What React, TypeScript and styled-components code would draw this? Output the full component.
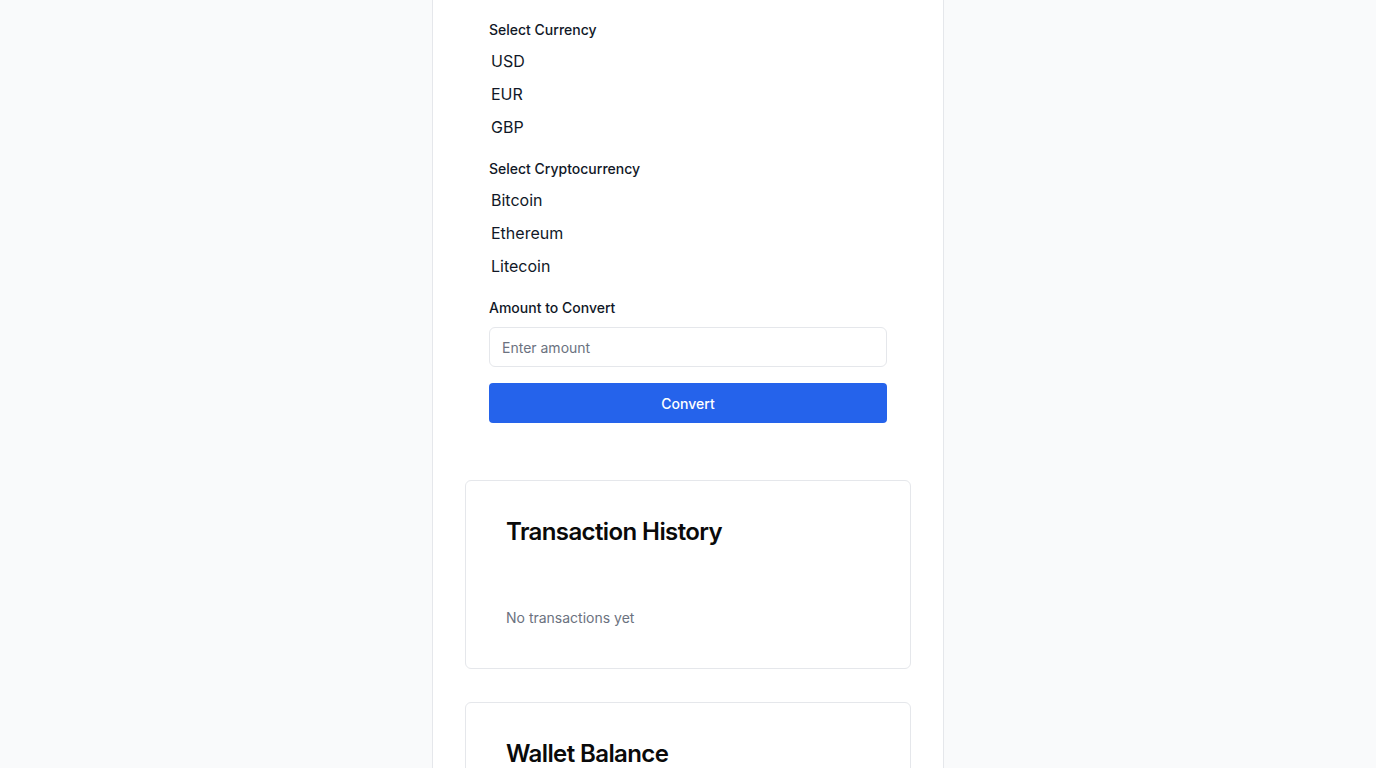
import React, { useState } from 'react';
import styled, { createGlobalStyle } from 'styled-components';

const GlobalStyle = createGlobalStyle`
    * { box-sizing: border-box; }
    body {
        margin: 0;
        background: #f9fafb;
        font-family: Inter, "Noto Sans", sans-serif;
        color: #0a0a0a;
    }
`;

const Page = styled.div`
    width: 512px;
    min-height: 100vh;
    margin: 0 auto;
    background: #ffffff;
    border-left: 1px solid #e5e7eb;
    border-right: 1px solid #e5e7eb;
    padding: 0 32px 40px;
    display: flex;
    flex-direction: column;
    gap: 33px;
`;

const Converter = styled.div`
    padding: 20px 24px 24px;
`;

const Label = styled.div`
    font-size: 14px;
    line-height: 20px;
    font-weight: 500;
    color: #111827;
    margin-bottom: 5px;
`;

const OptionList = styled.div`
    display: flex;
    flex-direction: column;
    margin-bottom: 15px;
`;

const Option = styled.div<{ $selected?: boolean }>`
    height: 33px;
    line-height: 33px;
    padding: 0 2px;
    font-size: 16px;
    color: #111827;
    cursor: pointer;
    background: ${p => (p.$selected ? '#f3f4f6' : 'transparent')};
`;

const Input = styled.input`
    display: block;
    width: 100%;
    height: 40px;
    margin-top: 9px;
    border: 1px solid #e5e7eb;
    border-radius: 6px;
    padding: 0 12px;
    font-family: Inter, "Noto Sans", sans-serif;
    font-size: 14px;
    color: #111827;
    outline: none;
    &::placeholder { color: #6b7280; }
`;

const Button = styled.button`
    display: block;
    width: 100%;
    height: 40px;
    margin-top: 16px;
    border: none;
    border-radius: 4px;
    background: #2563eb;
    color: #ffffff;
    font-family: Inter, "Noto Sans", sans-serif;
    font-size: 14px;
    font-weight: 500;
    cursor: pointer;
`;

const Card = styled.div`
    border: 1px solid #e5e7eb;
    border-radius: 6px;
    background: #ffffff;
    padding: 35px 40px 40px;
`;

const Title = styled.h2`
    margin: 0 0 60px;
    font-size: 24px;
    line-height: 32px;
    font-weight: 600;
    letter-spacing: -0.025em;
    color: #0a0a0a;
`;

const Muted = styled.p`
    margin: 0;
    font-size: 14px;
    line-height: 20px;
    color: #6b7280;
`;

const currencies = ['USD', 'EUR', 'GBP'];
const cryptos = ['Bitcoin', 'Ethereum', 'Litecoin'];

const App: React.FC = () => {
    const [amount, setAmount] = useState('');

    return (
        <>
            <GlobalStyle />
            <Page>
                <Converter>
                    <Label>Select Currency</Label>
                    <OptionList>
                        {currencies.map(c => <Option key={c}>{c}</Option>)}
                    </OptionList>
                    <Label>Select Cryptocurrency</Label>
                    <OptionList>
                        {cryptos.map(c => <Option key={c}>{c}</Option>)}
                    </OptionList>
                    <Label>Amount to Convert</Label>
                    <Input
                        type="text"
                        placeholder="Enter amount"
                        value={amount}
                        onChange={e => setAmount(e.target.value)}
                    />
                    <Button>Convert</Button>
                </Converter>
                <Card>
                    <Title>Transaction History</Title>
                    <Muted>No transactions yet</Muted>
                </Card>
                <Card>
                    <Title>Wallet Balance</Title>
                    <Muted>No balance yet</Muted>
                </Card>
            </Page>
        </>
    );
};

export default App;
